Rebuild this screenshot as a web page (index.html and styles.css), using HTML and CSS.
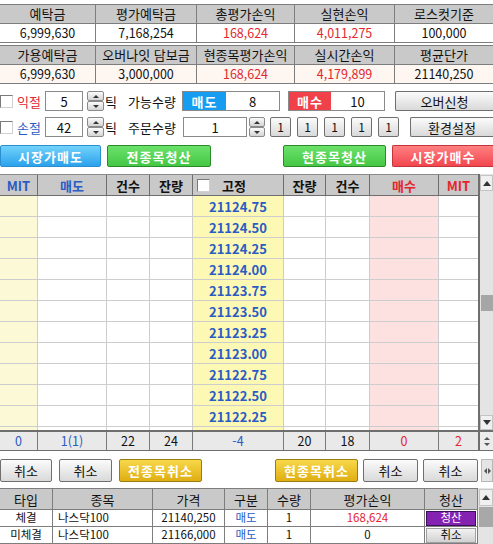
FILE: index.html
```html
<!DOCTYPE html>
<html lang="ko">
<head>
<meta charset="utf-8">
<title>주문</title>
<link rel="stylesheet" href="styles.css">
</head>
<body>
<div class="app">
  <div class="info">
    <div class="h">예탁금</div><div class="h">평가예탁금</div><div class="h">총평가손익</div><div class="h">실현손익</div><div class="h last">로스컷기준</div>
    <div class="v">6,999,630</div><div class="v">7,168,254</div><div class="v red">168,624</div><div class="v red">4,011,275</div><div class="v last">100,000</div>
  </div>
  <div class="info info2">
    <div class="h">가용예탁금</div><div class="h">오버나잇 담보금</div><div class="h">현종목평가손익</div><div class="h">실시간손익</div><div class="h last">평균단가</div>
    <div class="v">6,999,630</div><div class="v">3,000,000</div><div class="v red">168,624</div><div class="v red">4,179,899</div><div class="v last">21140,250</div>
  </div>

  <div class="ctrl first">
    <span class="chk"></span><span class="lbl red">익절</span><span class="inp w38">5</span>
    <span class="spin"><i class="up"></i><i class="dn"></i></span>
    <span class="tick">틱</span><span class="cap">가능수량</span>
    <div class="side sell"><span class="tag">매도</span><span class="val">8</span></div>
    <div class="side buy"><span class="tag">매수</span><span class="val">10</span></div>
    <button class="btn gray edge over">오버신청</button>
  </div>

  <div class="ctrl">
    <span class="chk"></span><span class="lbl blue">손절</span><span class="inp w38">42</span>
    <span class="spin"><i class="up"></i><i class="dn"></i></span>
    <span class="tick">틱</span><span class="cap">주문수량</span>
    <span class="inp w64">1</span>
    <span class="spin sp2"><i class="up"></i><i class="dn"></i></span>
    <div class="quick">
      <button class="btn gray q">1</button><button class="btn gray q">1</button><button class="btn gray q">1</button><button class="btn gray q">1</button><button class="btn gray q">1</button>
    </div>
    <button class="btn gray edge env">환경설정</button>
  </div>

  <div class="act">
    <button class="btn big bl">시장가매도</button>
    <button class="btn big gr all">전종목청산</button>
    <button class="btn big gr cur">현종목청산</button>
    <button class="btn big rd edge mkt">시장가매수</button>
  </div>

  <div class="book">
    <div class="book-main">
      <div class="grid9 obh">
        <div class="blue">MIT</div><div class="blue">매도</div><div>건수</div><div>잔량</div>
        <div class="fix"><span class="chk"></span><span class="fixt">고정</span></div>
        <div>잔량</div><div>건수</div><div class="red">매수</div><div class="red last">MIT</div>
      </div>
      <div class="obb">
        <div class="grid9 r"><div class="m1"></div><div></div><div></div><div></div><div class="px">21124.75</div><div></div><div></div><div class="bu"></div><div class="last"></div></div>
        <div class="grid9 r"><div class="m1"></div><div></div><div></div><div></div><div class="px">21124.50</div><div></div><div></div><div class="bu"></div><div class="last"></div></div>
        <div class="grid9 r"><div class="m1"></div><div></div><div></div><div></div><div class="px">21124.25</div><div></div><div></div><div class="bu"></div><div class="last"></div></div>
        <div class="grid9 r"><div class="m1"></div><div></div><div></div><div></div><div class="px">21124.00</div><div></div><div></div><div class="bu"></div><div class="last"></div></div>
        <div class="grid9 r"><div class="m1"></div><div></div><div></div><div></div><div class="px">21123.75</div><div></div><div></div><div class="bu"></div><div class="last"></div></div>
        <div class="grid9 r"><div class="m1"></div><div></div><div></div><div></div><div class="px">21123.50</div><div></div><div></div><div class="bu"></div><div class="last"></div></div>
        <div class="grid9 r"><div class="m1"></div><div></div><div></div><div></div><div class="px">21123.25</div><div></div><div></div><div class="bu"></div><div class="last"></div></div>
        <div class="grid9 r"><div class="m1"></div><div></div><div></div><div></div><div class="px">21123.00</div><div></div><div></div><div class="bu"></div><div class="last"></div></div>
        <div class="grid9 r"><div class="m1"></div><div></div><div></div><div></div><div class="px">21122.75</div><div></div><div></div><div class="bu"></div><div class="last"></div></div>
        <div class="grid9 r"><div class="m1"></div><div></div><div></div><div></div><div class="px">21122.50</div><div></div><div></div><div class="bu"></div><div class="last"></div></div>
        <div class="grid9 r"><div class="m1"></div><div></div><div></div><div></div><div class="px">21122.25</div><div></div><div></div><div class="bu"></div><div class="last"></div></div>
        <div class="grid9 r"><div class="m1"></div><div></div><div></div><div></div><div class="px"></div><div></div><div></div><div class="bu"></div><div class="last"></div></div>
      </div>
      <div class="grid9 obs">
        <div class="blue">0</div><div class="blue">1(1)</div><div>22</div><div>24</div><div class="blue">-4</div><div>20</div><div>18</div><div class="red">0</div><div class="red last">2</div>
      </div>
    </div>
    <div class="vscroll">
      <div class="sb-btn sb-up"><span class="tri-up"></span></div>
      <div class="sb-track"><div class="sb-thumb"></div></div>
      <div class="sb-btn sb-down"><span class="tri-dn"></span></div>
      <div class="sb-spin"><span class="tri-up sm"></span><span class="tri-dn sm"></span></div>
    </div>
  </div>

  <div class="cbar">
    <button class="btn gray c1">취소</button>
    <button class="btn gray c2">취소</button>
    <button class="btn yl c3">전종목취소</button>
    <button class="btn yl c4">현종목취소</button>
    <button class="btn gray c5">취소</button>
    <button class="btn gray c5">취소</button>
    <div class="hs"><span class="tri-l"></span><span class="tri-r"></span></div>
  </div>

  <div class="orders">
    <div class="orders-main">
      <div class="grid7 oh">
        <div>타입</div><div>종목</div><div>가격</div><div>구분</div><div>수량</div><div>평가손익</div><div>청산</div>
      </div>
      <div class="grid7 orow">
        <div>체결</div><div class="name">나스닥100</div><div>21140,250</div><div class="blue">매도</div><div>1</div><div class="red">168,624</div><div class="bcell"><button class="liq">청산</button></div>
      </div>
      <div class="grid7 orow">
        <div>미체결</div><div class="name">나스닥100</div><div>21166,000</div><div class="blue">매도</div><div>1</div><div>0</div><div class="bcell"><button class="cnl">취소</button></div>
      </div>
    </div>
    <div class="oscroll">
      <div class="sb-btn ob-up"><span class="tri-up"></span></div>
      <div class="ob-thumb"></div>
    </div>
  </div>
</div>
</body>
</html>
```
FILE: styles.css
```css
* { box-sizing: border-box; margin: 0; padding: 0; }
html, body { background: #fff; }
body {
  width: 493px;
  height: 544px;
  overflow: hidden;
  font-family: "Noto Sans CJK KR", "Noto Sans", sans-serif;
  font-size: 12px;
  color: #111;
  line-height: 1;
}
.app { width: 493px; padding-top: 4px; }

.red { color: #e3262e; }
.blue { color: #2a5cc4; }

/* summary tables */
.info {
  display: grid;
  grid-template-columns: 96px 101px 98px 100px 98px;
  border-top: 1px solid #7d7d7d;
}
.info2 { margin-top: 2px; }
.info .h, .info .v {
  height: 19px;
  line-height: 18px;
  text-align: center;
  white-space: nowrap;
  overflow: hidden;
  border-right: 1px solid #7d7d7d;
  border-bottom: 1px solid #7d7d7d;
}
.info .h { background: #c9c9c9; font-size: 13px; }
.info .v { font-size: 12.5px; }
.info .last { border-right: 0; }
.info2 .v { background: #fdf6f1; }

/* control rows */
.ctrl {
  display: flex;
  align-items: center;
  height: 20px;
  margin-top: 6px;
  white-space: nowrap;
}
.ctrl.first { margin-top: 7px; }
.chk {
  display: inline-block;
  flex-shrink: 0;
  width: 13px;
  height: 13px;
  background: #fff;
  border: 1px solid;
  border-color: #7a7a7a #d0d0d0 #d0d0d0 #7a7a7a;
}
.ctrl .chk { margin-right: 4px; }
.lbl { width: 28px; font-size: 13px; }
.inp {
  height: 20px;
  border: 1px solid #8a8a8a;
  background: #fff;
  display: flex;
  align-items: center;
  justify-content: center;
  font-size: 13px;
  flex-shrink: 0;
}
.w38 { width: 38px; }
.w64 { width: 64px; margin-left: 1px; }
.spin {
  display: flex;
  flex-direction: column;
  justify-content: space-between;
  width: 17px;
  height: 20px;
  margin-left: 4px;
  flex-shrink: 0;
}
.spin.sp2 { width: 16px; margin-left: 2px; }
.spin i {
  display: flex;
  align-items: center;
  justify-content: center;
  height: 10px;
  border: 1px solid #8a8a8a;
  border-radius: 2px;
  background: linear-gradient(#fbfbfb, #d4d4d4);
}
.spin i.up::before {
  content: "";
  border-left: 3px solid transparent;
  border-right: 3px solid transparent;
  border-bottom: 3px solid #333;
}
.spin i.dn::before {
  content: "";
  border-left: 3px solid transparent;
  border-right: 3px solid transparent;
  border-top: 3px solid #333;
}
.tick { width: 24px; padding-left: 1px; font-size: 13px; }
.cap { width: 54px; font-size: 13px; }

.side {
  display: flex;
  height: 20px;
  border: 1px solid #8a8a8a;
  background: #fff;
  flex-shrink: 0;
}
.sell { width: 98px; margin-right: 8px; }
.buy { width: 97px; margin-right: 10px; }
.tag {
  width: 43px;
  display: flex;
  align-items: center;
  justify-content: center;
  color: #fff;
  font-weight: bold;
  font-size: 13px;
  letter-spacing: 1px;
}
.sell .tag { background: #169cf0; }
.buy .tag { background: #f0404a; width: 42px; }
.val {
  flex: 1;
  display: flex;
  align-items: center;
  justify-content: center;
  font-size: 13px;
}

/* buttons */
.btn {
  font-family: inherit;
  font-size: 13px;
  line-height: 1;
  color: #111;
  border: 1px solid #6f6f6f;
  border-radius: 2px;
  display: flex;
  align-items: center;
  justify-content: center;
  flex-shrink: 0;
  white-space: nowrap;
  cursor: default;
}
.btn.gray { background: linear-gradient(#fbfbfb, #d9d9d9); }
.btn.edge { border-right: 0; border-top-right-radius: 0; border-bottom-right-radius: 0; }
.over { width: 98px; height: 20px; }
.quick { display: flex; margin-left: 5px; }
.q { width: 21px; height: 20px; font-size: 12px; }
.q + .q { margin-left: 6px; }
.env { width: 83px; height: 20px; margin-left: 11px; }

.act { display: flex; height: 22px; margin-top: 8px; }
.btn.big {
  height: 22px;
  color: #fff;
  font-weight: bold;
  font-size: 13px;
  letter-spacing: 1px;
}
.bl { width: 101px; background: linear-gradient(#72d2fb, #2ba2ec); border-color: #2a8fd0; }
.gr { background: linear-gradient(#6be26b, #45c745); border-color: #2a8a2a; }
.rd { background: linear-gradient(#ff8080, #f2464f); border-color: #c3343c; }
.all { width: 104px; margin-left: 6px; }
.cur { width: 103px; margin-left: 72px; }
.mkt { width: 101px; margin-left: 6px; }

/* order book */
.book { display: flex; margin-top: 7px; height: 277px; }
.book-main { width: 478px; }
.grid9 {
  display: grid;
  grid-template-columns: 38px 69px 43px 43px 91px 42px 44px 69px 39px;
}
.obh { border-top: 1px solid #8a8a8a; background: #c9c9c9; }
.obh > div {
  height: 21px;
  border-right: 1px solid #6e6e6e;
  border-bottom: 1px solid #6e6e6e;
  display: flex;
  align-items: center;
  justify-content: center;
  font-weight: bold;
  font-size: 13px;
}
.obh > div.last { border-right: 0; }
.obh .fix { justify-content: flex-start; padding-left: 4px; }
.fixt { margin-left: 12px; }
.obb { height: 234px; overflow: hidden; }
.r > div {
  height: 21px;
  border-right: 1px solid #cdcdcd;
  border-bottom: 1px solid #cdcdcd;
  background: #fff;
}
.r > div.last { border-right: 0; }
.r > .m1 { background: #fcf9d6; }
.r > .px {
  background: #fdf9b5;
  color: #2a5cc4;
  font-weight: bold;
  font-size: 13px;
  display: flex;
  align-items: center;
  justify-content: center;
}
.r > .bu { background: #fde0e0; }
.obs {
  border-top: 2px solid #6e6e6e;
  border-bottom: 1px solid #6e6e6e;
  background: #e9e9e9;
}
.obs > div {
  height: 18px;
  border-right: 1px solid #7a7a7a;
  display: flex;
  align-items: center;
  justify-content: center;
  font-size: 12.5px;
}
.obs > div.last { border-right: 0; }

.vscroll {
  width: 15px;
  display: flex;
  flex-direction: column;
  border-left: 2px solid #6e6e6e;
  background: #e4e4e4;
}
.sb-btn {
  display: flex;
  align-items: center;
  justify-content: center;
  background: #f0f0f0;
  border: 1px solid #c4c4c4;
}
.sb-up { height: 16px; margin-top: 1px; }
.sb-track { height: 224px; }
.sb-thumb { width: 12px; height: 16px; margin-top: 104px; margin-left: 1px; background: #a6a6a6; }
.sb-down { height: 15px; }
.sb-spin {
  height: 21px;
  border-top: 2px solid #6e6e6e;
  border-bottom: 1px solid #6e6e6e;
  background: #ececec;
  display: flex;
  flex-direction: column;
  align-items: center;
  justify-content: center;
  gap: 3px;
}
.tri-up, .tri-dn, .tri-l, .tri-r { display: block; width: 0; height: 0; }
.tri-up { border-left: 4px solid transparent; border-right: 4px solid transparent; border-bottom: 5px solid #333; }
.tri-dn { border-left: 4px solid transparent; border-right: 4px solid transparent; border-top: 5px solid #333; }
.tri-up.sm { border-left-width: 3px; border-right-width: 3px; border-bottom-width: 3px; border-bottom-color: #555; }
.tri-dn.sm { border-left-width: 3px; border-right-width: 3px; border-top-width: 3px; border-top-color: #555; }
.tri-l { border-top: 3px solid transparent; border-bottom: 3px solid transparent; border-right: 3px solid #555; }
.tri-r { border-top: 3px solid transparent; border-bottom: 3px solid transparent; border-left: 3px solid #555; }

/* cancel bar */
.cbar { display: flex; height: 23px; margin-top: 8px; }
.cbar .btn { height: 23px; }
.c1 { width: 52px; }
.c2 { width: 53px; margin-left: 7px; }
.btn.yl {
  background: linear-gradient(#f8d84a, #dfae12);
  border-color: #9b7c12;
  color: #fff;
  font-weight: bold;
  letter-spacing: 1px;
}
.c3 { width: 83px; margin-left: 7px; }
.c4 { width: 83px; margin-left: 73px; }
.c5 { width: 55px; margin-left: 5px; }
.hs {
  width: 12px;
  margin-left: 3px;
  height: 23px;
  background: #e4e4e4;
  border: 1px solid #b8b8b8;
  display: flex;
  align-items: center;
  justify-content: center;
  gap: 1px;
}

/* orders */
.orders { display: flex; margin-top: 6px; }
.orders-main { width: 478px; }
.grid7 { display: grid; grid-template-columns: 53px 100px 72px 43px 43px 114px 53px; }
.oh { border-top: 1px solid #7d7d7d; background: #c9c9c9; }
.oh > div, .orow > div {
  border-right: 1px solid #7d7d7d;
  border-bottom: 1px solid #7d7d7d;
  display: flex;
  align-items: center;
  justify-content: center;
  white-space: nowrap;
}
.oh > div { height: 21px; font-size: 13px; }
.orow > div { height: 17px; font-size: 11.5px; overflow: hidden; }
.orow > .name { justify-content: flex-start; padding-left: 5px; }
.orow > .bcell { padding: 0 1px; }
.liq, .cnl {
  font-family: inherit;
  font-size: 11.5px;
  line-height: 1;
  width: 100%;
  height: 15px;
  display: flex;
  align-items: center;
  justify-content: center;
}
.liq { background: #8422b2; border: 1px solid #3b0f5a; color: #fff; }
.cnl { background: linear-gradient(#f2f2f2, #d2d2d2); border: 1px solid #a0a0a0; color: #111; }
.oscroll { width: 15px; background: #e4e4e4; display: flex; flex-direction: column; padding-left: 1px; }
.ob-up { height: 17px; margin-top: 1px; }
.ob-thumb { height: 20px; margin-top: 1px; background: #a8a8a8; }
```
